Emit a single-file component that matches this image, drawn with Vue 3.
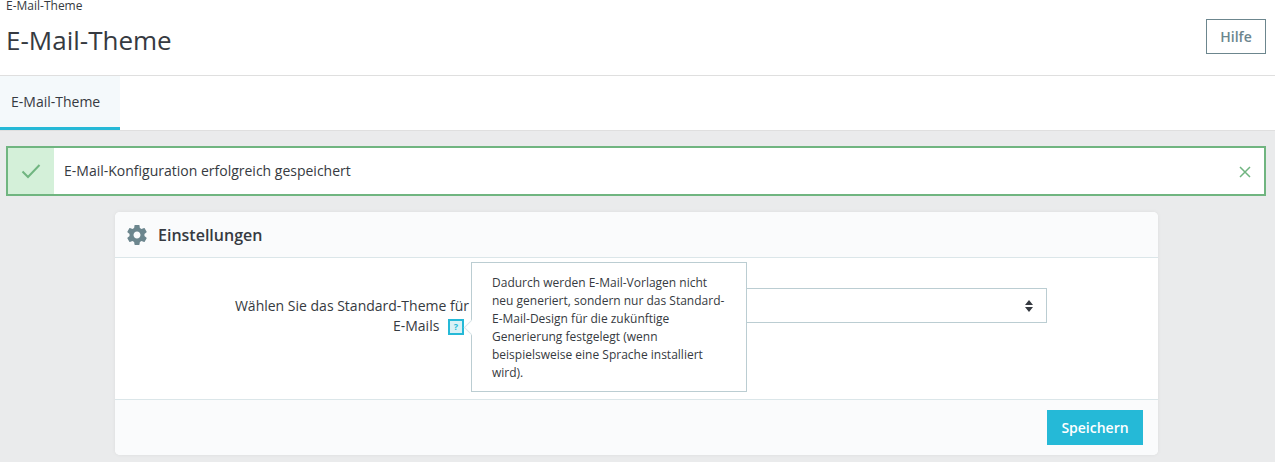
<template>
  <div class="page">
    <header class="head">
      <div class="crumb">E-Mail-Theme</div>
      <div class="title-row">
        <h1>E-Mail-Theme</h1>
        <button class="help" type="button">Hilfe</button>
      </div>
    </header>

    <nav class="tabs">
      <a class="tab">E-Mail-Theme</a>
    </nav>

    <main class="content">
      <div class="alert">
        <div class="alert-icon">
          <svg width="20" height="16" viewBox="0 0 20 16">
            <path d="M1.5 8.5 L7 14 L18.5 2" fill="none" stroke="#70b580" stroke-width="2" />
          </svg>
        </div>
        <div class="alert-text">{{ message }}</div>
        <svg class="alert-close" width="12" height="12" viewBox="0 0 12 12">
          <path d="M1 1 L11 11 M11 1 L1 11" fill="none" stroke="#70b580" stroke-width="1.5" />
        </svg>
      </div>

      <section class="card">
        <div class="card-head">
          <svg width="24" height="24" viewBox="0 0 24 24">
            <path fill="#6c868e" d="M19.43 12.98c.04-.32.07-.64.07-.98s-.03-.66-.07-.98l2.11-1.65c.19-.15.24-.42.12-.64l-2-3.46c-.12-.22-.39-.3-.61-.22l-2.49 1c-.52-.4-1.08-.73-1.69-.98l-.38-2.65C14.46 2.18 14.25 2 14 2h-4c-.25 0-.46.18-.49.42l-.38 2.65c-.61.25-1.17.59-1.69.98l-2.49-1c-.23-.09-.49 0-.61.22l-2 3.46c-.13.22-.07.49.12.64l2.11 1.65c-.04.32-.07.65-.07.98s.03.66.07.98l-2.11 1.65c-.19.15-.24.42-.12.64l2 3.46c.12.22.39.3.61.22l2.49-1c.52.4 1.08.73 1.69.98l.38 2.65c.03.24.24.42.49.42h4c.25 0 .46-.18.49-.42l.38-2.65c.61-.25 1.17-.59 1.69-.98l2.49 1c.23.09.49 0 .61-.22l2-3.46c.12-.22.07-.49-.12-.64l-2.11-1.65zM12 15.5c-1.93 0-3.5-1.57-3.5-3.5s1.57-3.5 3.5-3.5 3.5 1.57 3.5 3.5-1.57 3.5-3.5 3.5z" />
          </svg>
          <h2>Einstellungen</h2>
        </div>

        <div class="card-body">
          <div class="label">
            Wählen Sie das Standard-Theme für E-Mails
            <span class="hint">?</span>
          </div>
          <div class="select">
            <svg width="8" height="12" viewBox="0 0 8 12">
              <path fill="#363a41" d="M4 0 L8 5 L0 5 Z M0 7 L8 7 L4 12 Z" />
            </svg>
          </div>
          <div class="tooltip">{{ tooltip }}</div>
        </div>

        <div class="card-foot">
          <button class="save" type="button">Speichern</button>
        </div>
      </section>
    </main>
  </div>
</template>

<script setup>
const message = 'E-Mail-Konfiguration erfolgreich gespeichert'
const tooltip = 'Dadurch werden E-Mail-Vorlagen nicht neu generiert, sondern nur das Standard-E-Mail-Design für die zukünftige Generierung festgelegt (wenn beispielsweise eine Sprache installiert wird).'
</script>

<style>
html, body {
  margin: 0;
  background: #eaebec;
}
</style>

<style scoped>
.page {
  height: 462px;
  overflow: hidden;
  font-family: "Open Sans", "Liberation Sans", sans-serif;
  color: #363a41;
  background: #eaebec;
}

.head {
  height: 75px;
  box-sizing: border-box;
  padding: 0 9px 0 6px;
  background: #fff;
}

.crumb {
  font-size: 12px;
  line-height: 12px;
}

.title-row {
  display: flex;
  justify-content: space-between;
  align-items: flex-start;
  padding-top: 7px;
}

h1 {
  margin: 0;
  font-size: 26px;
  font-weight: 400;
  line-height: 42px;
}

.help {
  width: 60px;
  height: 35px;
  padding: 0;
  border: 1px solid #6c868e;
  background: #fff;
  color: #6c868e;
  font: 600 14px "Open Sans", sans-serif;
}

.tabs {
  height: 54px;
  background: #fff;
  border-top: 1px solid #dfdfdf;
  border-bottom: 1px solid #dfdfdf;
}

.tab {
  display: block;
  width: 120px;
  height: 54px;
  box-sizing: border-box;
  padding-left: 11px;
  border-bottom: 3px solid #25b9d7;
  background: #f4f9fb;
  font-size: 14px;
  line-height: 51px;
}

.content {
  padding: 15px 9px 0 6px;
}

.alert {
  display: flex;
  align-items: center;
  height: 50px;
  box-sizing: border-box;
  border: 2px solid #70b580;
  background: #fff;
}

.alert-icon {
  display: flex;
  align-items: center;
  justify-content: center;
  width: 46px;
  height: 100%;
  background: #d4f0d9;
}

.alert-text {
  flex: 1;
  padding: 0 0 2px 10px;
  font-size: 14px;
}

.alert-close {
  margin-right: 13px;
  margin-top: 2px;
}

.card {
  width: 1043px;
  margin: 16px 0 0 109px;
  border-radius: 5px;
  background: #fff;
  box-shadow: 0 0 4px rgba(0, 0, 0, 0.06);
}

.card-head {
  display: flex;
  align-items: center;
  gap: 9px;
  height: 46px;
  box-sizing: border-box;
  padding-left: 10px;
  border-bottom: 1px solid #dbe6e9;
  border-radius: 5px 5px 0 0;
  background: #fafbfc;
}

h2 {
  margin: 0;
  font-size: 16px;
  font-weight: 600;
}

.card-body {
  position: relative;
  display: flex;
  align-items: flex-start;
  height: 141px;
  box-sizing: border-box;
  padding-top: 30px;
}

.label {
  width: 240px;
  margin-left: 114px;
  padding-top: 8px;
  text-align: right;
  font-size: 14px;
  line-height: 20px;
}

.hint {
  display: inline-block;
  width: 16px;
  height: 16px;
  box-sizing: border-box;
  margin: 0 5px 0 5px;
  border: 2px solid #25b9d7;
  background: #d9f1f6;
  color: #25b9d7;
  font-size: 9px;
  font-weight: 700;
  line-height: 12px;
  text-align: center;
  vertical-align: 1px;
}

.select {
  display: flex;
  align-items: center;
  justify-content: flex-end;
  width: 572px;
  height: 35px;
  box-sizing: border-box;
  margin-left: 6px;
  padding-right: 13px;
  border: 1px solid #bbcdd2;
}

.tooltip {
  position: absolute;
  left: 356px;
  top: 4px;
  width: 276px;
  height: 130px;
  box-sizing: border-box;
  padding: 11px 20px;
  border: 1px solid #bbcdd2;
  background: #fff;
  font-size: 12px;
  line-height: 18px;
}

.tooltip::before {
  content: "";
  position: absolute;
  left: -6px;
  top: 59px;
  width: 11px;
  height: 11px;
  box-sizing: border-box;
  transform: rotate(45deg);
  background: #fff;
  border-left: 1px solid #dbe6e9;
  border-bottom: 1px solid #dbe6e9;
}

.card-foot {
  display: flex;
  justify-content: flex-end;
  align-items: center;
  height: 56px;
  box-sizing: border-box;
  padding-right: 15px;
  border-top: 1px solid #dbe6e9;
  border-radius: 0 0 5px 5px;
  background: #fafbfc;
}

.save {
  width: 96px;
  height: 35px;
  padding: 0;
  border: 0;
  background: #25b9d7;
  color: #fff;
  font: 600 14px "Open Sans", sans-serif;
}
</style>
